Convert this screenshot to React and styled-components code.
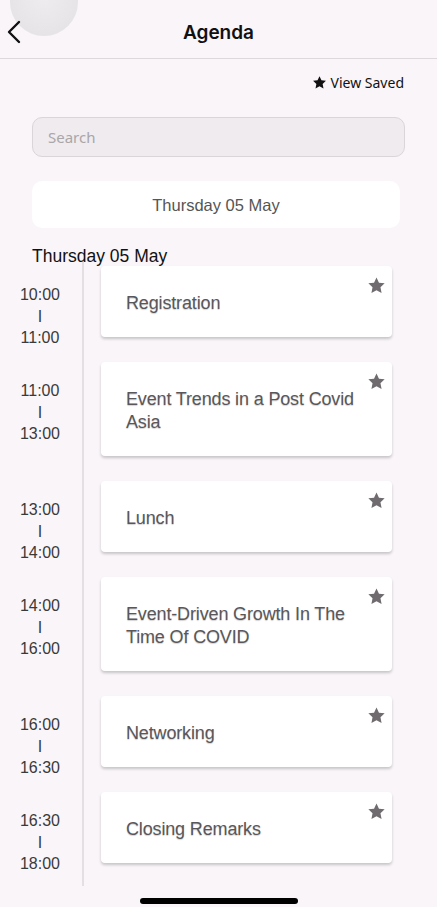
import React from 'react';
import styled, { createGlobalStyle } from 'styled-components';

const GlobalStyle = createGlobalStyle`
    html, body {
        margin: 0;
        padding: 0;
        background: #f9f5f9;
    }
    * {
        box-sizing: border-box;
    }
`;

const SESSIONS = [
    { start: '10:00', end: '11:00', title: 'Registration' },
    { start: '11:00', end: '13:00', title: 'Event Trends in a Post Covid Asia' },
    { start: '13:00', end: '14:00', title: 'Lunch' },
    { start: '14:00', end: '16:00', title: 'Event-Driven Growth In The Time Of COVID' },
    { start: '16:00', end: '16:30', title: 'Networking' },
    { start: '16:30', end: '18:00', title: 'Closing Remarks' }
];

const Page = styled.div`
    position: relative;
    width: 437px;
    height: 907px;
    overflow: hidden;
    background: #f9f5f9;
    font-family: "Liberation Sans", Arial, sans-serif;
`;

const Ripple = styled.div`
    position: absolute;
    left: 10px;
    top: -32px;
    width: 68px;
    height: 68px;
    border-radius: 50%;
    background: radial-gradient(circle at 50% 45%, #eeecee 0%, #e6e4e6 70%);
`;

const Header = styled.header`
    height: 59px;
    padding-top: 7px;
    display: flex;
    align-items: center;
    justify-content: center;
    border-bottom: 1px solid #dcd8dc;
    position: relative;
`;

const BackButton = styled.div`
    position: absolute;
    left: 6px;
    top: 20px;
    width: 16px;
    height: 24px;
`;

const Title = styled.h1`
    margin: 0;
    font-family: Inter, "Noto Sans", sans-serif;
    font-size: 19px;
    font-weight: 600;
    color: #111;
`;

const Body = styled.div`
    padding: 0 32px;
`;

const SavedLink = styled.div`
    display: flex;
    justify-content: flex-end;
    align-items: center;
    gap: 4px;
    padding: 2px 1px 0 0;
    height: 45px;
    font-family: "Noto Sans", sans-serif;
    font-size: 14px;
    color: #111;
`;

const Search = styled.div`
    margin-top: 13px;
    height: 40px;
    border-radius: 10px;
    border: 1px solid #d9d5d9;
    background: #efebef;
    display: flex;
    align-items: center;
    padding-left: 15px;
    font-family: "Noto Sans", sans-serif;
    font-size: 15px;
    color: #a9a6a9;
`;

const DatePill = styled.div`
    margin-top: 24px;
    width: 368px;
    height: 47px;
    border-radius: 10px;
    background: #fff;
    display: flex;
    align-items: center;
    justify-content: center;
    padding-top: 1px;
    font-size: 16.5px;
    color: #555;
`;

const DayHeading = styled.div`
    margin-top: 18px;
    font-size: 17.5px;
    color: #111;
    line-height: 20px;
`;

const Timeline = styled.div`
    padding-bottom: 23px;
    position: relative;
    display: flex;
    flex-direction: column;
    gap: 25px;
`;

const Line = styled.div`
    position: absolute;
    left: 50px;
    top: -4px;
    bottom: 0;
    width: 2px;
    background: #e3dfe3;
`;

const Row = styled.div`
    display: flex;
    align-items: flex-start;
`;

const Times = styled.div`
    flex: 0 0 auto;
    width: 52px;
    margin-left: -18px;
    margin-bottom: -30px;
    padding-top: 18px;
    display: flex;
    flex-direction: column;
    align-items: center;
    font-size: 16px;
    line-height: 21.5px;
    color: #3a3a3a;
`;

const Card = styled.div`
    margin-left: 35px;
    width: 291px;
    position: relative;
    background: #fff;
    border-radius: 4px;
    box-shadow: 0 2px 3px rgba(0, 0, 0, 0.2);
    padding: 26px 20px 22px 25px;
    font-size: 18px;
    line-height: 23px;
    font-weight: 300;
    color: #5a575a;
    text-shadow: 0 1px 1px rgba(0, 0, 0, 0.18);
    letter-spacing: -0.15px;
`;

const StarWrap = styled.div`
    position: absolute;
    top: 10px;
    right: 6px;
    line-height: 0;
`;

const HomeBar = styled.div`
    position: absolute;
    left: 140px;
    bottom: 3px;
    width: 158px;
    height: 6px;
    border-radius: 3px;
    background: #000;
`;

const Star = ({ size, color }) => (
    <svg width={size} height={size} viewBox="0 0 24 24">
        <path
            fill={color}
            d="M12 1.8l3.1 6.6 7.2.9-5.3 5 1.4 7.1L12 17.9l-6.4 3.5 1.4-7.1-5.3-5 7.2-.9z"
        />
    </svg>
);

const App = () => (
    <Page>
        <GlobalStyle />
        <Ripple />
        <Header>
            <BackButton>
                <svg width="16" height="24" viewBox="0 0 16 24">
                    <path d="M13 2 L3 12 L13 22" fill="none" stroke="#111" strokeWidth="2.4" strokeLinecap="round" strokeLinejoin="round" />
                </svg>
            </BackButton>
            <Title>Agenda</Title>
        </Header>
        <Body>
            <SavedLink>
                <Star size={15} color="#111" />
                <span>View Saved</span>
            </SavedLink>
            <Search>Search</Search>
            <DatePill>Thursday 05 May</DatePill>
            <DayHeading>Thursday 05 May</DayHeading>
            <Timeline>
                <Line />
                {SESSIONS.map((s) => (
                    <Row key={s.start + s.title}>
                        <Times>
                            <span>{s.start}</span>
                            <span>I</span>
                            <span>{s.end}</span>
                        </Times>
                        <Card>
                            {s.title}
                            <StarWrap>
                                <Star size={19} color="#6f6b6f" />
                            </StarWrap>
                        </Card>
                    </Row>
                ))}
            </Timeline>
        </Body>
        <HomeBar />
    </Page>
);

export default App;
